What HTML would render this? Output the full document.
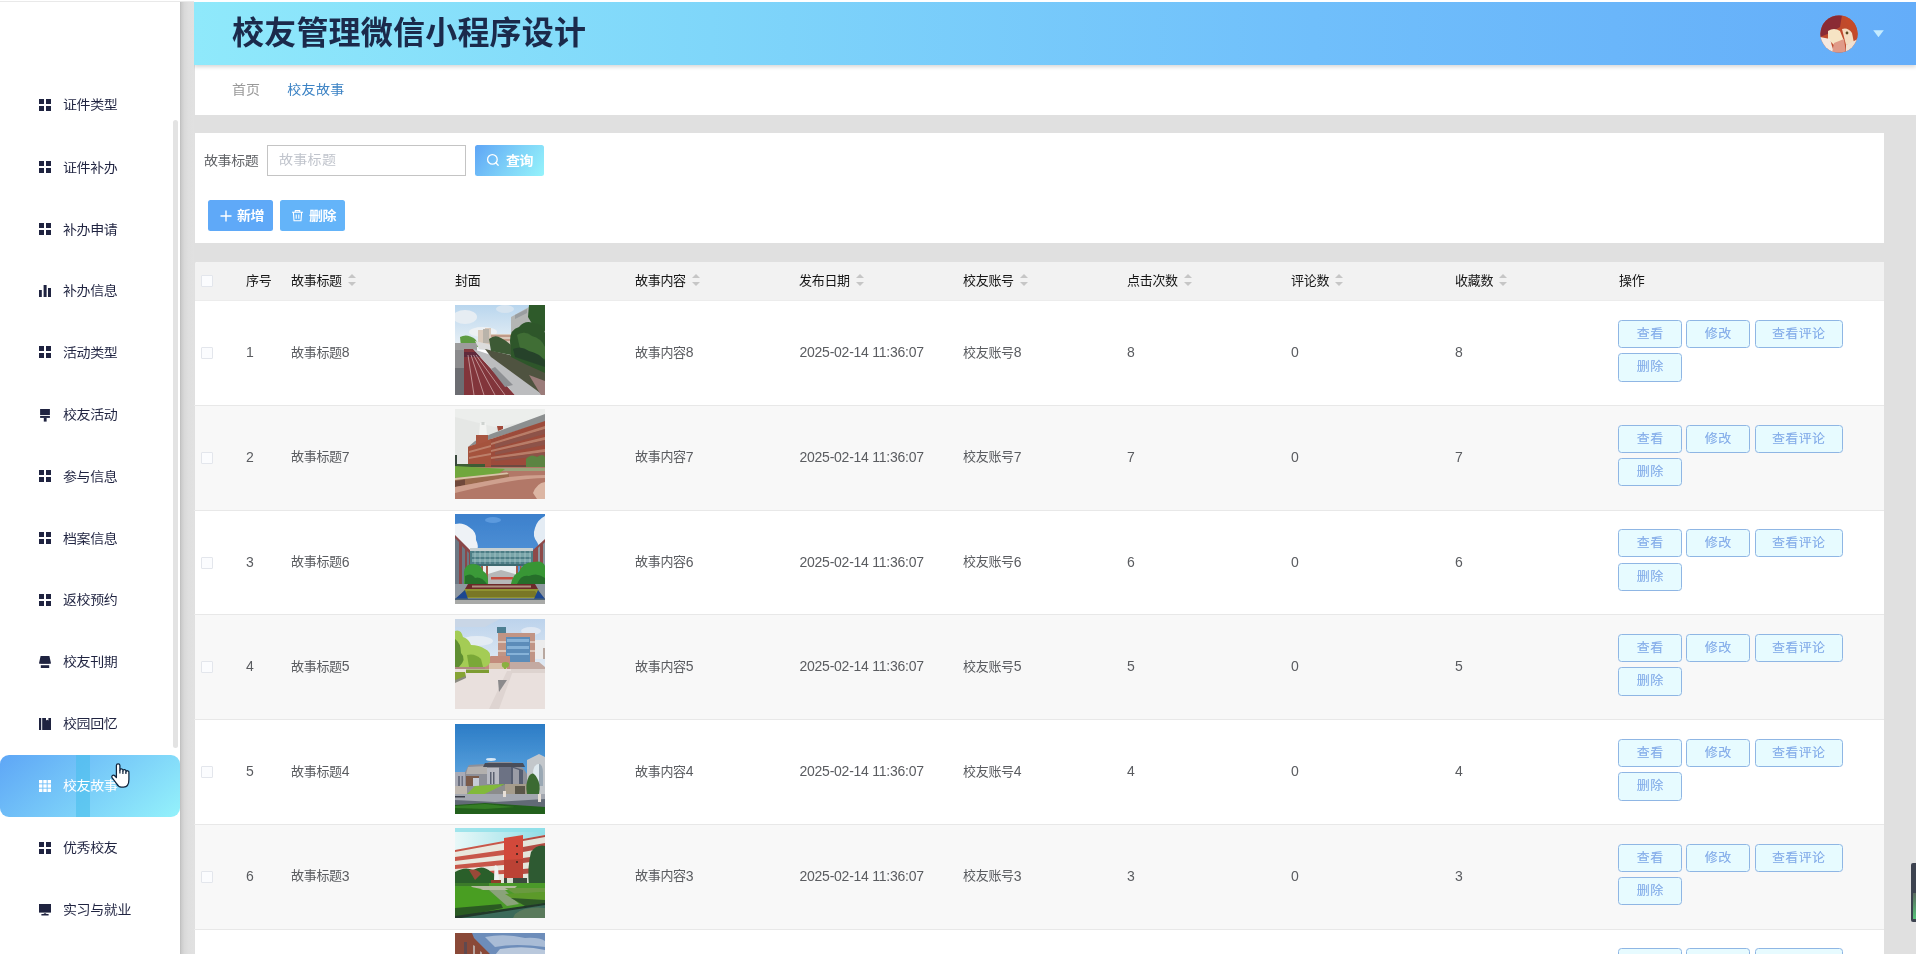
<!DOCTYPE html>
<html lang="zh-CN"><head><meta charset="utf-8"><title>校友管理微信小程序设计</title>
<style>
*{box-sizing:border-box;margin:0;padding:0}
html,body{width:1916px;height:954px;overflow:hidden;background:#fff}
body{font-family:"Liberation Sans","Noto Sans CJK SC",sans-serif;position:relative;color:#606266}
.abs{position:absolute}
#topline{left:0;top:1px;width:194px;height:1px;background:#e9e9e9}
#side{will-change:transform;left:0;top:2px;width:180px;height:952px;background:#fff;overflow:hidden}
#sideshadow{left:180px;top:2px;width:14px;height:952px;background:linear-gradient(90deg,#bdbdbd 0,#cdcdcd 12%,#d9d9d9 32%,#dfdfdf 60%,#e1e1e1 100%)}
#sthumb{left:173px;top:120px;width:5px;height:627.5px;background:#e3e3e3;border-radius:2.5px}
.mi{position:absolute;left:0;width:180px;height:62px;font-size:14px;color:#1f2340;line-height:62px;white-space:nowrap}
.mi svg{position:absolute;left:39px;top:25px;width:12px;height:12px;fill:#1f2340}
.mi span{position:absolute;left:63px;top:0;letter-spacing:-0.4px;transform:scaleY(.9)}
.mi.act{background:linear-gradient(140deg,#5ea6f6 0%,#94f2fb 100%);border-radius:9px;color:#fff}
.mi.act svg{fill:#fff}
#main{will-change:transform;left:194px;top:2px;width:1722px;height:952px;background:#e0e0e0;overflow:hidden}
#hdr{left:0;top:0;width:1722px;height:63px;background:linear-gradient(90deg,#8fe9fb 0%,#7fd6fa 30%,#70bffb 65%,#64adf9 100%);box-shadow:0 2px 4px rgba(0,0,0,.16);z-index:3}
#title{left:38px;top:1px;height:63px;line-height:60px;font-size:32px;font-weight:bold;color:#1b2a4b;white-space:nowrap;letter-spacing:0.2px}
#bc{left:0;top:63px;width:1722px;height:50px;background:#fff;font-size:14px;line-height:49px}
#card{left:0;top:131px;width:1690.2px;height:110px;background:#fff}
#tbl{left:0;top:260px;width:1690.2px;height:700px;background:#fff;border-radius:4px 0 0 0;overflow:hidden}

#card .lbl{left:10px;top:12px;height:31px;line-height:30px;font-size:14px;color:#606266;letter-spacing:-0.4px;white-space:nowrap;transform:scaleY(.9)}
#card .inp{left:73px;top:12px;width:199px;height:31px;border:1px solid #c4c4c4;background:#fff;font-size:14px;color:#c0c4cc;line-height:28px;padding-left:11px;letter-spacing:0.3px}
.btn{position:absolute;height:31px;border-radius:2.5px;color:#fff;font-size:14px;font-weight:bold;line-height:30px;white-space:nowrap}
.btn svg{position:absolute;fill:none;stroke:#fff}
.btn span{position:absolute;top:0;letter-spacing:-0.6px;transform:scaleY(.9)}

#tbl{font-size:13px;color:#5a5c60}
#th{left:0;top:0;width:1690.2px;height:39px;border-radius:4px 0 0 0;border-bottom:1px solid #ececec;background:#f2f2f2;color:#161616}
#th b{position:absolute;top:0;height:38px;line-height:37px;font-weight:normal;white-space:nowrap;letter-spacing:-0.3px}
#th b i{display:inline-block;position:relative;width:9px;height:12px;margin-left:6px;vertical-align:-1px}
#th b i:before{content:"";position:absolute;left:0;top:0;border:4.2px solid transparent;border-top-width:0;border-bottom:4px solid #c6c6c6}
#th b i:after{content:"";position:absolute;left:0;top:7.7px;border:4.2px solid transparent;border-bottom-width:0;border-top:4px solid #c6c6c6}
.cb{position:absolute;left:7px;width:12px;height:12px;border:1px solid #e3e6ec;background:#fbfcfe;border-radius:1px}
.tr{position:absolute;left:0;width:1690.2px;height:104.76px;background:#fff}
.tr.ev{background:#f8f8f8}
.sep{position:absolute;left:0;width:1690.2px;height:1px;background:#e8e8e8;z-index:2}
.tr u em{font-style:normal;font-size:14px;letter-spacing:-0.25px;position:relative;top:.7px}
.tr u{position:absolute;top:0.5px;height:104px;line-height:101.8px;text-decoration:none;white-space:nowrap;letter-spacing:-0.3px}
.tr svg.ph{position:absolute;left:261.4px;top:3.7px;width:90px;height:90px}
.ob{position:absolute;height:28px;border:1px solid #8fb6e4;border-radius:3.5px;background:#e7fbff;color:#86aeea;text-shadow:0 .6px 0 rgba(134,174,234,.5);font-size:13px;line-height:25.4px;text-align:center;letter-spacing:0.3px;white-space:nowrap}
.ob span{display:inline-block;transform:scaleY(.92);margin-right:-.3px}
</style></head>
<body>
<div id="topline" class="abs"></div>
<div id="side" class="abs">
<div class="mi" style="top:71.7px"><svg viewBox="0 0 12 12"><rect x="0" y="0" width="5" height="5"/><rect x="7" y="0" width="5" height="5"/><rect x="0" y="7" width="5" height="5"/><rect x="7" y="7" width="5" height="5"/></svg><span>证件类型</span></div>
<div class="mi" style="top:133.6px"><svg viewBox="0 0 12 12"><rect x="0" y="0" width="5" height="5"/><rect x="7" y="0" width="5" height="5"/><rect x="0" y="7" width="5" height="5"/><rect x="7" y="7" width="5" height="5"/></svg><span>证件补办</span></div>
<div class="mi" style="top:195.5px"><svg viewBox="0 0 12 12"><rect x="0" y="0" width="5" height="5"/><rect x="7" y="0" width="5" height="5"/><rect x="0" y="7" width="5" height="5"/><rect x="7" y="7" width="5" height="5"/></svg><span>补办申请</span></div>
<div class="mi" style="top:257.4px"><svg style="top:26px" viewBox="0 0 12 12"><rect x="0" y="5" width="2.8" height="7"/><rect x="4.6" y="0" width="3" height="12"/><rect x="9" y="3" width="3" height="9"/></svg><span>补办信息</span></div>
<div class="mi" style="top:319.3px"><svg viewBox="0 0 12 12"><rect x="0" y="0" width="5" height="5"/><rect x="7" y="0" width="5" height="5"/><rect x="0" y="7" width="5" height="5"/><rect x="7" y="7" width="5" height="5"/></svg><span>活动类型</span></div>
<div class="mi" style="top:381.2px"><svg style="top:26.2px;height:13px" viewBox="0 0 12 13"><rect x="1.1" y="0" width="9.8" height="6"/><rect x="1.1" y="6.9" width="9.8" height="2"/><rect x="4.8" y="8.8" width="2.8" height="3.8"/></svg><span>校友活动</span></div>
<div class="mi" style="top:443.1px"><svg viewBox="0 0 12 12"><rect x="0" y="0" width="5" height="5"/><rect x="7" y="0" width="5" height="5"/><rect x="0" y="7" width="5" height="5"/><rect x="7" y="7" width="5" height="5"/></svg><span>参与信息</span></div>
<div class="mi" style="top:505.0px"><svg viewBox="0 0 12 12"><rect x="0" y="0" width="5" height="5"/><rect x="7" y="0" width="5" height="5"/><rect x="0" y="7" width="5" height="5"/><rect x="7" y="7" width="5" height="5"/></svg><span>档案信息</span></div>
<div class="mi" style="top:566.9px"><svg viewBox="0 0 12 12"><rect x="0" y="0" width="5" height="5"/><rect x="7" y="0" width="5" height="5"/><rect x="0" y="7" width="5" height="5"/><rect x="7" y="7" width="5" height="5"/></svg><span>返校预约</span></div>
<div class="mi" style="top:628.8px"><svg viewBox="0 0 12 12"><path d="M1.6 0H10.4L12 7.2Q11 8.6 10 7.6Q9 8.6 8 7.6Q7 8.6 6 7.6Q5 8.6 4 7.6Q3 8.6 2 7.6Q1 8.6 0 7.2Z"/><path d="M1.8 9.2H10.2V12H1.8Z"/></svg><span>校友刊期</span></div>
<div class="mi" style="top:690.7px"><svg viewBox="0 0 12 12"><rect x="0" y="0" width="2.2" height="12"/><path d="M3.2 0H7V2.6L8.2 1.8L9.4 2.6V0H12V12H3.2Z"/></svg><span>校园回忆</span></div>
<div class="mi act" style="top:752.6px"><i class="abs" style="left:76px;top:0;width:14px;height:62px;background:rgba(70,190,235,.55)"></i><svg viewBox="0 0 12 12"><rect x="0" y="0" width="3.4" height="3.4"/><rect x="4.3" y="0" width="3.4" height="3.4"/><rect x="8.6" y="0" width="3.4" height="3.4"/><rect x="0" y="4.3" width="3.4" height="3.4"/><rect x="4.3" y="4.3" width="3.4" height="3.4"/><rect x="8.6" y="4.3" width="3.4" height="3.4"/><rect x="0" y="8.6" width="3.4" height="3.4"/><rect x="4.3" y="8.6" width="3.4" height="3.4"/><rect x="8.6" y="8.6" width="3.4" height="3.4"/></svg><span>校友故事</span></div>
<div class="mi" style="top:814.5px"><svg viewBox="0 0 12 12"><rect x="0" y="0" width="5" height="5"/><rect x="7" y="0" width="5" height="5"/><rect x="0" y="7" width="5" height="5"/><rect x="7" y="7" width="5" height="5"/></svg><span>优秀校友</span></div>
<div class="mi" style="top:877.4px"><svg viewBox="0 0 12 12"><rect x="0" y="0" width="12" height="8.6"/><path d="M4.4 10L5.4 9.2H6.6L7.6 10H9.6V11.4H2.4V10Z"/></svg><span>实习与就业</span></div>
<div id="sthumb" class="abs" style="top:118px"></div>
</div>
<div id="sideshadow" class="abs"></div>
<div id="main" class="abs">
<div id="hdr" class="abs"><div id="title" class="abs">校友管理微信小程序设计</div><svg class="abs" style="left:1626.3px;top:12.6px;width:38px;height:38px" viewBox="0 0 38 38"><defs><clipPath id="ac"><circle cx="19" cy="19" r="18.6"/></clipPath></defs>
<g clip-path="url(#ac)"><rect width="38" height="38" fill="#c04a2c"/>
<path d="M0 0H22L20 12L10 18L0 22Z" fill="#8a2a34"/>
<path d="M22 0H38V24L30 14Z" fill="#c44a2a"/>
<path d="M8 16Q14 12 20 16L24 26L14 30L8 24Z" fill="#f6e4c4"/>
<path d="M22 14Q28 12 32 18L34 28L26 30Z" fill="#f4dcc0"/>
<path d="M0 22L10 24L14 38H0Z" fill="#f4e8e0"/>
<path d="M14 28L24 24L26 38H12Z" fill="#e09a88"/>
<path d="M26 30L38 24V38H26Z" fill="#f0e0d0"/>
<circle cx="27" cy="18" r="1.4" fill="#5a4a20"/>
</g></svg>
<svg class="abs" style="left:1679.3px;top:27.8px;width:11px;height:7.4px" viewBox="0 0 11 7.4"><path d="M0.2 0.3H10.8L5.5 7.2Z" fill="#c4ebff"/></svg></div>
<div id="bc" class="abs"><span class="abs" style="left:38px;color:#999;transform:scaleY(.9)">首页</span><span class="abs" style="left:93.3px;color:#3b82c4;letter-spacing:.3px;transform:scaleY(.9)">校友故事</span></div>
<div id="card" class="abs"><div class="abs lbl">故事标题</div>
<div class="abs inp"><span style="display:inline-block;transform:scaleY(.9)">故事标题</span></div>
<div class="btn" style="left:281px;top:12px;width:69px;background:linear-gradient(125deg,#5ea5f6 0%,#7fd3f8 55%,#95f3fb 100%)"><svg style="left:11px;top:8px;width:14px;height:14px" viewBox="0 0 14 14"><circle cx="6.4" cy="6.4" r="4.8" stroke-width="1.3"/><path d="M9.8 9.8L12.2 12.2" stroke-width="1.3" stroke-linecap="round"/></svg><span style="left:31px">查询</span></div>
<div class="btn" style="left:14px;top:67px;width:65px;background:#5fa9f8"><svg style="left:11.5px;top:9.5px;width:12px;height:12px" viewBox="0 0 12 12"><path d="M6 0.5V11.5M0.5 6H11.5" stroke-width="1.4"/></svg><span style="left:29px">新增</span></div>
<div class="btn" style="left:86px;top:67px;width:65px;background:#64b4f9"><svg style="left:11px;top:9px;width:13px;height:13px" viewBox="0 0 13 13"><path d="M1 3.2H12M4.2 3.2V1.6H8.8V3.2M2.4 3.4L3 11.8H10L10.6 3.4M5.2 5.6V9.8M7.8 5.6V9.8" stroke-width="1.1" stroke-linejoin="round"/></svg><span style="left:29px">删除</span></div></div>
<div id="tbl" class="abs"><div id="th" class="abs"><span class="cb" style="top:13px"></span>
<b style="left:52px">序号</b>
<b style="left:97px">故事标题<i></i></b>
<b style="left:261px">封面</b>
<b style="left:441px">故事内容<i></i></b>
<b style="left:605px">发布日期<i></i></b>
<b style="left:769px">校友账号<i></i></b>
<b style="left:933px">点击次数<i></i></b>
<b style="left:1097px">评论数<i></i></b>
<b style="left:1261px">收藏数<i></i></b>
<b style="left:1425px">操作</b>
</div>
<div class="tr" style="top:39.00px">
<span class="cb" style="top:46px"></span>
<u style="left:52px"><em>1</em></u>
<u style="left:97px">故事标题<em>8</em></u>
<svg class="ph" viewBox="0 0 90 90" preserveAspectRatio="none" style="height:90px"><defs><linearGradient id="s1" x1="0" y1="0" x2="0" y2="1"><stop offset="0" stop-color="#b9d6ee"/><stop offset="1" stop-color="#eef3f6"/></linearGradient></defs><filter id="bl1" x="-10%" y="-10%" width="120%" height="120%"><feGaussianBlur stdDeviation="0.4"/></filter><g filter="url(#bl1)">
<rect width="90" height="45" fill="url(#s1)"/>
<ellipse cx="10" cy="12" rx="12" ry="7" fill="#e6edf3"/><ellipse cx="28" cy="27" rx="14" ry="5" fill="#edf1f4"/><ellipse cx="50" cy="4" rx="9" ry="4" fill="#d6e4f0"/>
<path d="M56 12L74 2L90 0V30H56Z" fill="#b4b6b4"/><path d="M60 10L72 4V8L60 14Z" fill="#9a9ea0"/>
<path d="M23 25H30V23H36V29H56V40H23Z" fill="#d9c9bb"/><path d="M28 24H34V38H28Z" fill="#b9b3aa"/><path d="M36 30H56V32H36ZM36 34H56V36H36Z" fill="#c09a88"/>
<path d="M5 32Q12 28 20 34L26 42H6Z" fill="#5d9b42"/>
<path d="M0 38H22V48H0Z" fill="#9c9c9c"/>
<path d="M20 36L45 42V47L24 44Z" fill="#dcdcdc"/>
<path d="M0 45H9V90H0Z" fill="#8b8b8d"/><path d="M0 63H9V90H0Z" fill="#6c6d72"/>
<path d="M9 44H18L60 90H9Z" fill="#82343a"/>
<path d="M9 47H21L26 52H9Z" fill="#5e2a3a"/>
<path d="M13 50L19 90M16 50L29 90M18.5 50L40 90M21 50L50 90" stroke="#d9b9b9" stroke-width="0.7" fill="none"/>
<path d="M18 44L36 50L89 90H60Z" fill="#bcbdbf"/>
<path d="M40 62L58 80L50 82L36 64Z" fill="#8e9094"/>
<path d="M30 44L55 50L90 66V90H88L36 52Z" fill="#50523f"/>
<path d="M74 70L90 76V90H86Z" fill="#9b7b7a"/>
<path d="M74 0H90V26L80 24L73 12Z" fill="#2f5a2c"/>
<path d="M55 36Q55 24 64 22Q70 15 78 18Q88 18 90 28V68L72 60L56 52Z" fill="#2e572b"/>
<path d="M34 34Q40 29 46 33Q52 36 56 40V50L36 46Z" fill="#3c5a36"/>
<path d="M62 30Q70 25 77 31Q86 33 90 42V54L66 48Z" fill="#3f6e35"/>
<path d="M58 44Q66 40 74 46Q84 48 90 56V62L60 52Z" fill="#25432a"/>
</g></svg>
<u style="left:441px">故事内容<em>8</em></u>
<u style="left:605.5px"><em>2025-02-14 11:36:07</em></u>
<u style="left:769px">校友账号<em>8</em></u>
<u style="left:933px"><em>8</em></u>
<u style="left:1097px"><em>0</em></u>
<u style="left:1261px"><em>8</em></u>
<div class="ob" style="left:1424.2px;top:18.8px;width:63.6px"><span>查看</span></div>
<div class="ob" style="left:1492.4px;top:18.8px;width:63.2px"><span>修改</span></div>
<div class="ob" style="left:1560.5px;top:18.8px;width:88px"><span>查看评论</span></div>
<div class="ob" style="left:1424.2px;top:52.2px;width:63.6px;height:28.4px"><span>删除</span></div>
</div>
<div class="tr ev" style="top:143.76px">
<span class="cb" style="top:46px"></span>
<u style="left:52px"><em>2</em></u>
<u style="left:97px">故事标题<em>7</em></u>
<svg class="ph" viewBox="0 0 90 90" preserveAspectRatio="none" style="height:90px"><filter id="bl2" x="-10%" y="-10%" width="120%" height="120%"><feGaussianBlur stdDeviation="0.4"/></filter><g filter="url(#bl2)"><rect width="90" height="90" fill="#e5e7e5"/>
<path d="M0 0H90V10L40 18L0 8Z" fill="#eceeec"/>
<path d="M20 32L36 25L90 5V13L36 30L13 38Z" fill="#8c8f90"/>
<path d="M13 38L36 30L90 12V58H13Z" fill="#9c4c3a"/>
<path d="M13 38L36 30V57H13Z" fill="#a5523e"/>
<path d="M36 34L90 17V20L36 36ZM36 41L90 28V31L36 43ZM36 48L90 40V43L36 50ZM14 42L36 36V38L14 44ZM14 48L36 44V46L14 50Z" fill="#cfa690" opacity=".55"/>
<path d="M40 35L90 20V25L40 39ZM40 43L90 31V36L40 46ZM40 50L90 43V47L40 52Z" fill="#7e5a56" opacity=".5"/>
<path d="M21 26H33V32L21 36Z" fill="#a85440"/>
<path d="M25 14H31L32 26H24Z" fill="#f2f3f1"/><path d="M26.5 13H29.5V16H26.5Z" fill="#cfd3d0"/>
<path d="M42 17H48V20L43 22Z" fill="#a14a3a"/>
<path d="M36 56H90V60H36Z" fill="#6e4a40"/>
<path d="M71 50Q76 44 82 48Q88 44 90 48V58H71Z" fill="#5c8442"/>
<path d="M0 55H30V58H0Z" fill="#3d5c34"/>
<path d="M0 46H2V58H0Z" fill="#39463c"/>
<path d="M0 58H90V90H0Z" fill="#b27868"/>
<path d="M28 59H90V62H50L30 61Z" fill="#9aa47a"/>
<path d="M0 57L50 60L42 66L0 69Z" fill="#6fa73d"/>
<path d="M0 69L44 65L54 64V68L0 78Z" fill="#9a6a4e"/><path d="M0 72L10 70.5V76L0 78Z" fill="#6f4a3a"/>
<path d="M0 69L52 63.5L54 65L0 71Z" fill="#d8c4a8"/>
<path d="M0 78L54 68Q70 66 90 66V69Q60 69 0 84Z" fill="#cfa08e"/>
<path d="M78 84Q82 74 90 73V90H82Z" fill="#dcb6a4"/>
</g></svg>
<u style="left:441px">故事内容<em>7</em></u>
<u style="left:605.5px"><em>2025-02-14 11:36:07</em></u>
<u style="left:769px">校友账号<em>7</em></u>
<u style="left:933px"><em>7</em></u>
<u style="left:1097px"><em>0</em></u>
<u style="left:1261px"><em>7</em></u>
<div class="ob" style="left:1424.2px;top:18.8px;width:63.6px"><span>查看</span></div>
<div class="ob" style="left:1492.4px;top:18.8px;width:63.2px"><span>修改</span></div>
<div class="ob" style="left:1560.5px;top:18.8px;width:88px"><span>查看评论</span></div>
<div class="ob" style="left:1424.2px;top:52.2px;width:63.6px;height:28.4px"><span>删除</span></div>
</div>
<div class="tr" style="top:248.52px">
<span class="cb" style="top:46px"></span>
<u style="left:52px"><em>3</em></u>
<u style="left:97px">故事标题<em>6</em></u>
<svg class="ph" viewBox="0 0 90 90" preserveAspectRatio="none" style="height:90px"><defs><linearGradient id="s3" x1="0" y1="0" x2="0" y2="1"><stop offset="0" stop-color="#3c80cc"/><stop offset="1" stop-color="#5c9cdc"/></linearGradient></defs><filter id="bl3" x="-10%" y="-10%" width="120%" height="120%"><feGaussianBlur stdDeviation="0.4"/></filter><g filter="url(#bl3)">
<rect width="90" height="70" fill="url(#s3)"/>
<path d="M0 10Q8 8 14 13Q22 18 21 26Q24 32 22 36H14L0 22Z" fill="#eef2f6"/>
<path d="M90 2Q82 6 80 14Q77 22 82 28L84 32L90 26Z" fill="#e4ecf4"/>
<ellipse cx="38" cy="6" rx="8" ry="3" fill="#5c9ade"/>
<path d="M0 21L15 36V72H0Z" fill="#8a4648"/>
<path d="M0 24L4 28V72H0ZM7 32L10 35V72H7ZM12 37L14 39V72H12Z" fill="#6c7884"/>
<path d="M90 25L78 36V52H90Z" fill="#8e4a4a"/><path d="M88 30L90 28V52H88ZM83 34L85 32V52H83Z" fill="#8a96a0"/>
<path d="M27 50H63V64H27Z" fill="#e9eff1"/>
<path d="M33 60L46 56L60 60V70H33Z" fill="#b6b8b8"/><path d="M36 63H58V65.5H36Z" fill="#c45040"/>
<path d="M26 50H28V70H26ZM31 50H33V70H31ZM61 50H63V70H61ZM65 50H66.5V70H65Z" fill="#a45a48"/>
<path d="M15 34H78V37H15Z" fill="#c6d0d2"/>
<path d="M15 37H78V51H15Z" fill="#4e7e86"/>
<path d="M17 39H76V43H17ZM17 45H76V48H17Z" fill="#7aa6aa"/>
<path d="M20 37V51M25 37V51M30 37V51M35 37V51M40 37V51M45 37V51M50 37V51M55 37V51M60 37V51M65 37V51M70 37V51M75 37V51" stroke="#c4d6d8" stroke-width="0.5"/>
<path d="M15 50H78V52H15Z" fill="#3e6a70"/>
<path d="M9 58Q10 50 18 50Q26 50 28 57Q34 60 33 70H9Z" fill="#3a9a38"/><path d="M10 62Q16 58 20 64Q26 62 32 70H10Z" fill="#28702c"/>
<path d="M56 70Q58 60 64 58Q68 48 78 48Q88 46 90 52V70Z" fill="#379636"/><path d="M62 70Q66 60 74 62Q82 58 90 64V70Z" fill="#266e2a"/>
<path d="M0 70H90V86H0Z" fill="#8f98a0"/>
<path d="M13 70H80L83 75H10Z" fill="#6c2c2a"/><path d="M17 71.5H76V73.5H17Z" fill="#c9b9a0" opacity=".7"/>
<path d="M10 75H83L88 84H3Z" fill="#8f9330"/><path d="M12 77H80L84 83H8Z" fill="#6a6422" opacity=".6"/>
<path d="M0 85L10 76L13 85ZM90 85L83 76L79 85Z" fill="#1f4690"/>
<path d="M0 84.5H90V86H0Z" fill="#4d6474"/>
<path d="M0 86H90V90H0Z" fill="#a9aaa8"/>
</g></svg>
<u style="left:441px">故事内容<em>6</em></u>
<u style="left:605.5px"><em>2025-02-14 11:36:07</em></u>
<u style="left:769px">校友账号<em>6</em></u>
<u style="left:933px"><em>6</em></u>
<u style="left:1097px"><em>0</em></u>
<u style="left:1261px"><em>6</em></u>
<div class="ob" style="left:1424.2px;top:18.8px;width:63.6px"><span>查看</span></div>
<div class="ob" style="left:1492.4px;top:18.8px;width:63.2px"><span>修改</span></div>
<div class="ob" style="left:1560.5px;top:18.8px;width:88px"><span>查看评论</span></div>
<div class="ob" style="left:1424.2px;top:52.2px;width:63.6px;height:28.4px"><span>删除</span></div>
</div>
<div class="tr ev" style="top:353.28px">
<span class="cb" style="top:46px"></span>
<u style="left:52px"><em>4</em></u>
<u style="left:97px">故事标题<em>5</em></u>
<svg class="ph" viewBox="0 0 90 90" preserveAspectRatio="none" style="height:90px"><defs><linearGradient id="s4" x1="0" y1="0" x2="0" y2="1"><stop offset="0" stop-color="#bcd3ec"/><stop offset="1" stop-color="#e4ecf4"/></linearGradient></defs><filter id="bl4" x="-10%" y="-10%" width="120%" height="120%"><feGaussianBlur stdDeviation="0.4"/></filter><g filter="url(#bl4)">
<rect width="90" height="52" fill="url(#s4)"/>
<ellipse cx="22" cy="22" rx="16" ry="5" fill="#e4ecf4"/><ellipse cx="76" cy="12" rx="10" ry="4" fill="#dfe8f3"/><path d="M0 0H45L30 8H0Z" fill="#c9d6e6"/>
<path d="M80 21H90V40H80Z" fill="#ececec"/><path d="M88 29H90V40H88Z" fill="#b8a8a0"/>
<path d="M42 8H51V14H42Z" fill="#4d7f92"/>
<path d="M43 14H80V44H43Z" fill="#c19484"/>
<path d="M51 18H75V44H51Z" fill="#5b8cb9"/><path d="M52 20H74V23H52ZM52 27H74V30H52ZM52 34H74V36H52Z" fill="#86b2d8"/>
<path d="M43 22H51V24H43ZM43 31H51V33H43ZM75 22H80V24H75ZM75 31H80V33H75Z" fill="#dcc4b8"/>
<path d="M29 40L36 37H55V50H29Z" fill="#c38c7c"/><path d="M34 44H52V50H34Z" fill="#d8c0a8"/>
<path d="M55 43H84L90 48V50H55Z" fill="#c3aaa2"/>
<path d="M0 12Q6 10 8 18Q14 20 16 26Q24 26 30 30Q36 32 35 40Q36 46 30 48H0Z" fill="#a4cc54"/>
<path d="M0 20Q6 24 6 34Q12 40 4 48H0Z" fill="#5e8e30"/><path d="M12 36Q20 34 26 40L28 48H14Z" fill="#7aa838"/>
<path d="M47 44Q50 42 54 44Q55 48 51 49V52H49V49Q46 48 47 44Z" fill="#8bb040"/>
<path d="M0 48H30V52H0Z" fill="#b08a82"/>
<path d="M0 50H90V90H0Z" fill="#e9e0dd"/>
<path d="M11 50.5H34V54H11Z" fill="#7d9c32"/><path d="M0 53H10L11 58L0 62Z" fill="#86a436"/><path d="M0 61L11 57V59L0 64Z" fill="#8a8a80"/>
<path d="M52 52L58 52L44 90H34Z" fill="#ded4d1"/>
<path d="M43 61H52L44 73Z" fill="#8b8a8c"/>
<path d="M56 50H90V54H56Z" fill="#ddd3cf"/>
</g></svg>
<u style="left:441px">故事内容<em>5</em></u>
<u style="left:605.5px"><em>2025-02-14 11:36:07</em></u>
<u style="left:769px">校友账号<em>5</em></u>
<u style="left:933px"><em>5</em></u>
<u style="left:1097px"><em>0</em></u>
<u style="left:1261px"><em>5</em></u>
<div class="ob" style="left:1424.2px;top:18.8px;width:63.6px"><span>查看</span></div>
<div class="ob" style="left:1492.4px;top:18.8px;width:63.2px"><span>修改</span></div>
<div class="ob" style="left:1560.5px;top:18.8px;width:88px"><span>查看评论</span></div>
<div class="ob" style="left:1424.2px;top:52.2px;width:63.6px;height:28.4px"><span>删除</span></div>
</div>
<div class="tr" style="top:458.04px">
<span class="cb" style="top:46px"></span>
<u style="left:52px"><em>5</em></u>
<u style="left:97px">故事标题<em>4</em></u>
<svg class="ph" viewBox="0 0 90 90" preserveAspectRatio="none" style="height:90px"><defs><linearGradient id="s5" x1="0" y1="0" x2="0" y2="1"><stop offset="0" stop-color="#2b7cc6"/><stop offset="1" stop-color="#6aaee4"/></linearGradient></defs><filter id="bl5" x="-10%" y="-10%" width="120%" height="120%"><feGaussianBlur stdDeviation="0.4"/></filter><g filter="url(#bl5)">
<rect width="90" height="70" fill="url(#s5)"/>
<ellipse cx="36" cy="35.5" rx="5" ry="1.4" fill="#d8e8f6"/>
<path d="M0 48H10V68H0Z" fill="#a9abb6"/><path d="M3 52H5V62H3ZM6.5 52H8V62H6.5Z" fill="#6c7080"/>
<path d="M72 36L84 30L90 33V70H72Z" fill="#c3c7cb"/><path d="M78 50Q78 40 84 40V62H78Z" fill="#dfe9ef"/><path d="M84 40Q88 40 88 50V62H84Z" fill="#9aa8b4"/>
<path d="M10 48L14 41L30 40L34 38H56L68 44L72 50V70H10Z" fill="#8d8f98"/>
<path d="M13 43L32 42V50H11Z" fill="#b3b0ae"/>
<path d="M32 44H44V60H32Z" fill="#b9bbc4"/><path d="M35 48H36.5V60H35ZM38 48H39.5V60H38Z" fill="#5a6070"/>
<path d="M44 42H58V62H44Z" fill="#6c7284"/>
<path d="M56 42L68 46V64H56Z" fill="#555d70"/><path d="M58 44L64 46V62H58Z" fill="#9a9ca6"/>
<path d="M11 52H24V62H11Z" fill="#7a5a48"/><path d="M18 54H24V62H18Z" fill="#c6ccd6"/>
<path d="M30 39H68L70 43H28Z" fill="#4a4e5a"/>
<path d="M50 60H72V70H50Z" fill="#a59c8c"/><path d="M60 62H70V70H60Z" fill="#5a5648"/>
<path d="M74 52Q78 46 82 54Q86 60 84 70H72Q70 60 74 52Z" fill="#3b6b30"/>
<path d="M12 70L20 62L50 60L30 70Z" fill="#82b93a"/>
<path d="M30 70L50 60.5V70Z" fill="#8b8c8c"/>
<path d="M0 62H12V70H0Z" fill="#c0b8b0"/>
<path d="M0 70H90V82H0Z" fill="#a3a7b0"/>
<path d="M0 76L40 78L90 75V84H0Z" fill="#626a76"/>
<path d="M0 72H10V73.5H0Z" fill="#3a3e48"/>
<path d="M0 81L30 79L90 83V90H0Z" fill="#23601a"/><path d="M0 82L30 80L60 83L30 85L0 84Z" fill="#357e25"/>
<path d="M48 67H51V73H48ZM83 70H86V78H83Z" fill="#e8e0d8"/>
</g></svg>
<u style="left:441px">故事内容<em>4</em></u>
<u style="left:605.5px"><em>2025-02-14 11:36:07</em></u>
<u style="left:769px">校友账号<em>4</em></u>
<u style="left:933px"><em>4</em></u>
<u style="left:1097px"><em>0</em></u>
<u style="left:1261px"><em>4</em></u>
<div class="ob" style="left:1424.2px;top:18.8px;width:63.6px"><span>查看</span></div>
<div class="ob" style="left:1492.4px;top:18.8px;width:63.2px"><span>修改</span></div>
<div class="ob" style="left:1560.5px;top:18.8px;width:88px"><span>查看评论</span></div>
<div class="ob" style="left:1424.2px;top:52.2px;width:63.6px;height:28.4px"><span>删除</span></div>
</div>
<div class="tr ev" style="top:562.80px">
<span class="cb" style="top:46px"></span>
<u style="left:52px"><em>6</em></u>
<u style="left:97px">故事标题<em>3</em></u>
<svg class="ph" viewBox="0 0 90 90" preserveAspectRatio="none" style="height:90px"><defs><linearGradient id="s6" x1="0" y1="0" x2="1" y2="0"><stop offset="0" stop-color="#e8f8f8"/><stop offset="1" stop-color="#8fdde6"/></linearGradient></defs><filter id="bl6" x="-10%" y="-10%" width="120%" height="120%"><feGaussianBlur stdDeviation="0.4"/></filter><g filter="url(#bl6)">
<rect width="90" height="60" fill="url(#s6)"/>
<path d="M0 0H90V4H0Z" fill="#8fe0e8" opacity=".8"/>
<path d="M0 22L49 13V56H0Z" fill="#e9e8de"/>
<path d="M0 22L49 13V15L0 24ZM0 29L49 22V27L0 33ZM0 37L49 32V37L0 41ZM0 45L49 42V46L0 48Z" fill="#c8574a"/>
<path d="M68 11L90 7V56H68Z" fill="#e4e4da"/>
<path d="M68 11L90 7V9L68 13ZM68 19L90 15V20L68 24ZM68 30L90 27V32L68 35ZM68 41L90 39V44L68 46Z" fill="#b34c42"/>
<path d="M49 10L68 7V50H49Z" fill="#d24a3a"/><path d="M49 32L68 31V50H49Z" fill="#bb4234"/>
<path d="M61 17H63V19H61ZM61 25H63V27H61ZM61 33H63V35H61Z" fill="#5a2a20"/>
<path d="M49 50H90V56H49Z" fill="#3a4a3c"/><path d="M52 50H58V56H52ZM72 50H78V56H72Z" fill="#d8dcd0"/>
<path d="M76 24Q82 16 90 18V58H74Q72 40 76 24Z" fill="#2e5a30"/>
<path d="M0 44Q10 38 18 42Q28 36 36 44Q42 46 44 56H0Z" fill="#2c5e2a"/><path d="M14 42Q22 40 26 46L20 52Z" fill="#9a4a38"/>
<path d="M39.5 38Q41.5 36 43 40L44 52H39Z" fill="#eef2f0"/><path d="M36 52H46V58H36Z" fill="#8e3e2c"/>
<path d="M0 55H90V90H0Z" fill="#4c9a2a"/>
<path d="M0 55H34V58H0Z" fill="#3b7a2a"/>
<path d="M16 58H62L58 62H20Z" fill="#b4bca0"/>
<path d="M34 62H50L64 76L52 78Z" fill="#8aa27a"/>
<path d="M50 60L90 60V64L60 66Z" fill="#6a9a40"/>
<path d="M50 66L90 64V74L66 76Z" fill="#5c9a2c"/><path d="M56 70L90 72V78L70 78Z" fill="#2e5a28"/>
<path d="M0 60Q20 56 36 66Q48 74 46 80L0 88Z" fill="#4a9e24"/><path d="M0 80L46 76L48 80L0 90Z" fill="#2c5a22"/>
<path d="M0 90L4 88L90 76V90Z" fill="#3a6a5a"/><path d="M0 88L90 75V77L6 90H0Z" fill="#20382c"/>
<path d="M60 86Q70 78 90 80V90H58Z" fill="#5a7a5c"/>
</g></svg>
<u style="left:441px">故事内容<em>3</em></u>
<u style="left:605.5px"><em>2025-02-14 11:36:07</em></u>
<u style="left:769px">校友账号<em>3</em></u>
<u style="left:933px"><em>3</em></u>
<u style="left:1097px"><em>0</em></u>
<u style="left:1261px"><em>3</em></u>
<div class="ob" style="left:1424.2px;top:18.8px;width:63.6px"><span>查看</span></div>
<div class="ob" style="left:1492.4px;top:18.8px;width:63.2px"><span>修改</span></div>
<div class="ob" style="left:1560.5px;top:18.8px;width:88px"><span>查看评论</span></div>
<div class="ob" style="left:1424.2px;top:52.2px;width:63.6px;height:28.4px"><span>删除</span></div>
</div>
<div class="tr" style="top:667.56px">
<span class="cb" style="top:46px"></span>
<u style="left:52px"><em>7</em></u>
<u style="left:97px">故事标题<em>2</em></u>
<svg class="ph" viewBox="0 0 90 22" preserveAspectRatio="none" style="height:22px"><filter id="bl7" x="-10%" y="-10%" width="120%" height="120%"><feGaussianBlur stdDeviation="0.4"/></filter><g filter="url(#bl7)"><rect width="90" height="22" fill="#6d8dba"/>
<path d="M30 4Q50 0 70 5Q84 4 90 8V14Q60 10 40 14Z" fill="#a9bcd6"/>
<path d="M45 16Q70 12 90 17V22H40Z" fill="#b9c8dc"/>
<path d="M0 0H17L19 5L24 10L36 22H0Z" fill="#8a4a38"/>
<path d="M9 9H12V22H9Z" fill="#5e4a50"/><path d="M18 12L20 13V22H18ZM25 18L27 19.5V22H25Z" fill="#b9a6a0"/>
</g></svg>
<u style="left:441px">故事内容<em>2</em></u>
<u style="left:605.5px"><em>2025-02-14 11:36:07</em></u>
<u style="left:769px">校友账号<em>2</em></u>
<u style="left:933px"><em>2</em></u>
<u style="left:1097px"><em>0</em></u>
<u style="left:1261px"><em>2</em></u>
<div class="ob" style="left:1424.2px;top:18.8px;width:63.6px"><span>查看</span></div>
<div class="ob" style="left:1492.4px;top:18.8px;width:63.2px"><span>修改</span></div>
<div class="ob" style="left:1560.5px;top:18.8px;width:88px"><span>查看评论</span></div>
<div class="ob" style="left:1424.2px;top:52.2px;width:63.6px;height:28.4px"><span>删除</span></div>
</div>
<div class="sep" style="top:143px"></div>
<div class="sep" style="top:248px"></div>
<div class="sep" style="top:352px"></div>
<div class="sep" style="top:457px"></div>
<div class="sep" style="top:562px"></div>
<div class="sep" style="top:667px"></div></div>
<div class="abs" style="left:0;top:63px;width:1px;height:900px;background:#e0e0e0"></div>
</div>
<div class="abs" style="left:1910.5px;top:863px;width:8px;height:59px;background:#3d4350;border-radius:2px"><i class="abs" style="left:2px;top:30px;width:6px;height:26px;background:linear-gradient(#5a6a60,#57c47a)"></i></div>
<svg class="abs" style="left:110.6px;top:763px;width:20px;height:26px;z-index:9" viewBox="0 0 20 26"><path d="M5.4 14.6V2.6A1.75 1.75 0 0 1 8.9 2.6V7.2A1.5 1.5 0 0 1 11.9 7.4V8A1.5 1.5 0 0 1 14.9 8.4V9A1.5 1.5 0 0 1 17.9 9.6V16.5Q17.9 24 12.5 24.2H10.2Q7.6 24 5.6 20.6L1.2 14.9Q0.2 13.2 1.8 12.3Q3 11.9 4 13Z" fill="#fff" stroke="#10243c" stroke-width="1.25" stroke-linejoin="round"/><path d="M8.9 7V10.6M11.9 8V10.9M14.9 9V11.1" stroke="#10243c" stroke-width="1.2" fill="none"/></svg>
</body></html>
